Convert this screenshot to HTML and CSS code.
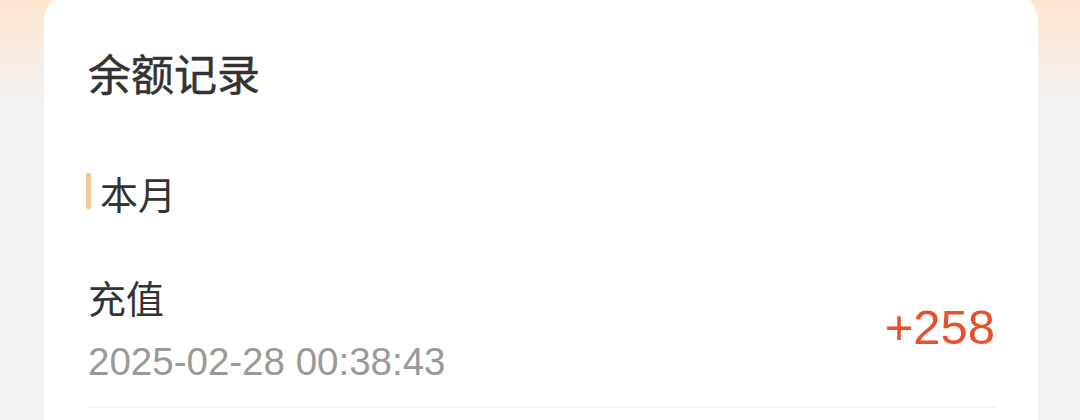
FILE: index.html
```html
<!DOCTYPE html>
<html lang="zh-CN">
<head>
  <meta charset="UTF-8" />
  <meta name="viewport" content="width=device-width, initial-scale=1.0"/>
  <title>余额记录</title>
  <link rel="stylesheet" href="styles.css">
</head>
<body>
  <div class="card">
    <div class="title">余额记录</div>

    <div class="month">本月</div>

    <div class="record">
      <div class="record-info">
        <div class="record-name">充值</div>
        <div class="record-time">2025-02-28 00:38:43</div>
      </div>
      <div class="record-amount">+258</div>
    </div>
  </div>
</body>
</html>
```

FILE: styles.css
```css
body {
  margin: 0;
  font-family: "Liberation Sans", "Noto Sans CJK SC", sans-serif;
  background: linear-gradient(to bottom, #fde6d0 0, #f8ece2 50px, #f2f2f2 100px, #f2f2f2 100%);
  height: 420px;
  overflow: hidden;
}

.card {
  margin: -6px 42px 0 44px;
  padding: 48px 43px 0 44px;
  height: 378px;
  background: #ffffff;
  border-radius: 26px 26px 0 0;
}

.title {
  font-family: "Noto Sans CJK SC", sans-serif;
  font-size: 43px;
  line-height: 60px;
  font-weight: 400;
  -webkit-text-stroke: 0.5px #333;
  color: #333;
}

.month {
  display: flex;
  align-items: center;
  margin-top: 66px;
  font-family: "Noto Sans CJK SC", sans-serif;
  font-size: 38px;
  line-height: 50px;
  color: #333;
}

.month::before {
  content: '';
  width: 5px;
  height: 36px;
  margin: 0 9px 4px -2px;
  background-color: #f2cb98;
  border-radius: 1px;
}

.record {
  display: flex;
  justify-content: space-between;
  align-items: center;
  margin-top: 54px;
  padding-bottom: 20px;
  border-bottom: 1px solid #efefef;
}

.record-name {
  font-family: "Noto Sans CJK SC", sans-serif;
  font-size: 38px;
  line-height: 50px;
  color: #333;
}

.record-time {
  margin-top: 15px;
  font-size: 38.5px;
  line-height: 50px;
  color: #999;
}

.record-amount {
  padding-bottom: 6px;
  font-size: 49px;
  line-height: 56px;
  color: #e8502e;
}
```
